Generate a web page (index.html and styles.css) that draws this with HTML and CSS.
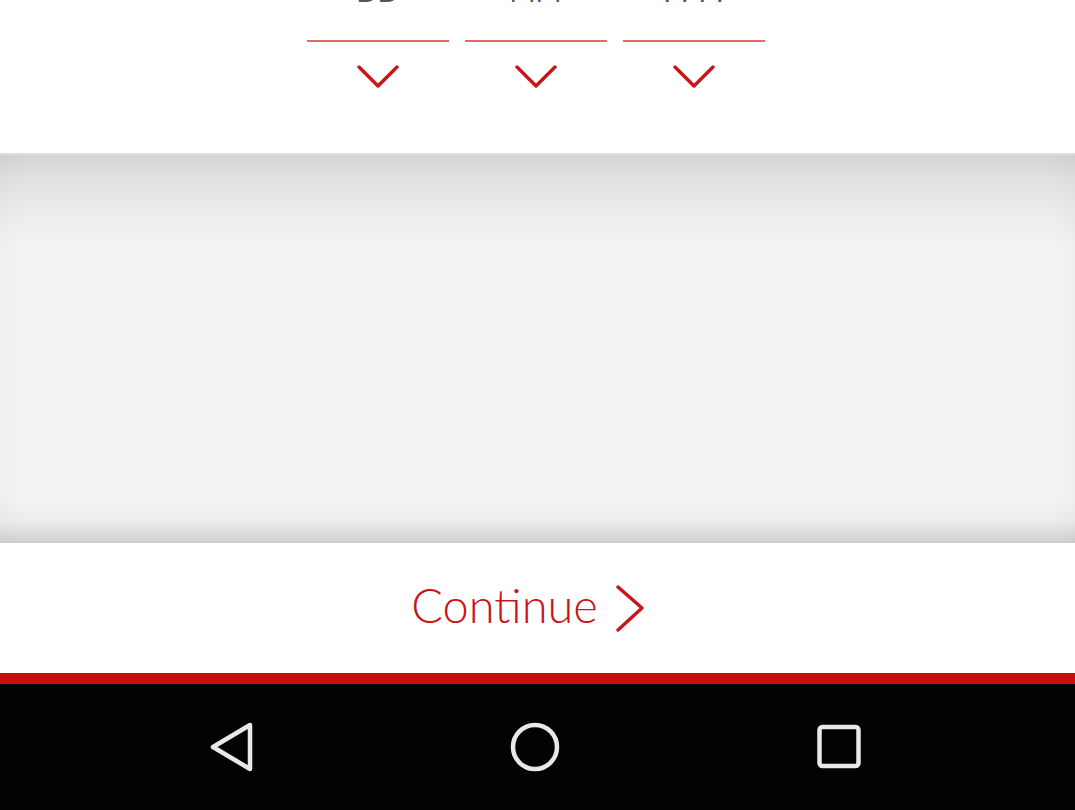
FILE: index.html
```html
<!DOCTYPE html>
<html>
<head>
<meta charset="utf-8">
<link rel="stylesheet" href="styles.css">
</head>
<body>
<div class="screen">
  <section class="top">
    <div class="fields">
      <div class="field">
        <div class="value">DD</div>
        <svg class="chev" width="42" height="24" viewBox="0 0 42 24"><polyline points="2,2 21,21 40,2"/></svg>
      </div>
      <div class="field">
        <div class="value">MM</div>
        <svg class="chev" width="42" height="24" viewBox="0 0 42 24"><polyline points="2,2 21,21 40,2"/></svg>
      </div>
      <div class="field">
        <div class="value">YYYY</div>
        <svg class="chev" width="42" height="24" viewBox="0 0 42 24"><polyline points="2,2 21,21 40,2"/></svg>
      </div>
    </div>
  </section>
  <section class="well"></section>
  <section class="action">
    <button class="continue">
      <span class="label">Continue</span>
      <svg class="next" width="32" height="48" viewBox="0 0 32 48"><polyline points="4,2 28,23 4,45"/></svg>
    </button>
  </section>
  <div class="redbar"></div>
  <nav class="navbar">
    <div class="navcell">
      <svg width="48" height="52" viewBox="0 0 48 52"><path d="M6 26 L43 4 L43 48 Z"/></svg>
    </div>
    <div class="navcell">
      <svg width="54" height="54" viewBox="0 0 54 54"><circle cx="27" cy="27" r="22"/></svg>
    </div>
    <div class="navcell">
      <svg width="48" height="48" viewBox="0 0 48 48"><rect x="4.5" y="4" width="39" height="39" rx="3"/></svg>
    </div>
  </nav>
</div>
</body>
</html>
```

FILE: styles.css
```css
* { box-sizing: border-box; }
html, body { margin: 0; padding: 0; background: #fff; }
body { width: 1075px; height: 810px; overflow: hidden; font-family: "Lato", "Liberation Sans", sans-serif; }

.screen { display: flex; flex-direction: column; height: 810px; }

.top { height: 153px; background: #fff; overflow: hidden; flex: none; }
.fields {
  display: flex;
  justify-content: center;
  gap: 16px;
  padding-right: 4px;
  margin-top: -26px;
}
.field { width: 142px; display: flex; flex-direction: column; align-items: center; }
.value {
  width: 100%;
  text-align: center;
  font-size: 28px;
  line-height: 34px;
  color: #555;
  height: 68px;
  border-bottom: 2px solid #e46a6a;
}
.chev { margin-top: 23px; }
.chev polyline { fill: none; stroke: #c9141a; stroke-width: 3.4; stroke-linecap: round; stroke-linejoin: round; }

.well {
  height: 390px;
  flex: none;
  background: linear-gradient(to bottom,
    #e4e4e4 0, #d4d4d4 3px, #e0e0e0 25px, #ebebeb 55px, #f3f3f3 95px,
    #f3f3f3 calc(100% - 45px), #ececec calc(100% - 22px), #d8d8d8 calc(100% - 6px), #cfcfcf 100%);
  box-shadow: inset 35px 0 35px -35px rgba(0,0,0,0.035), inset -35px 0 35px -35px rgba(0,0,0,0.035);
}

.action { height: 130px; flex: none; display: flex; align-items: center; justify-content: center; background: #fff; }
.continue {
  display: flex; align-items: center; gap: 16px;
  border: 0; background: none; padding: 0; margin: 0 0 0 -18px;
  font-family: inherit; cursor: pointer;
}
.label { font-size: 47px; font-weight: 300; color: #c9141a; letter-spacing: 0; line-height: 1; margin-top: -6px; }
.next { margin-top: 2px; }
.next polyline { fill: none; stroke: #c9141a; stroke-width: 3.4; stroke-linecap: round; stroke-linejoin: round; }

.redbar { height: 11px; background: #cc0b0b; flex: none; }

.navbar {
  flex: 1;
  background: #030303;
  display: grid;
  grid-template-columns: repeat(3, 304px);
  justify-content: center;
  align-items: center;
  padding-right: 5px;
}
.navcell { display: flex; justify-content: center; align-items: center; }
.navcell svg * { fill: none; stroke: #e9e9e9; stroke-width: 4.5; stroke-linejoin: round; }
```
